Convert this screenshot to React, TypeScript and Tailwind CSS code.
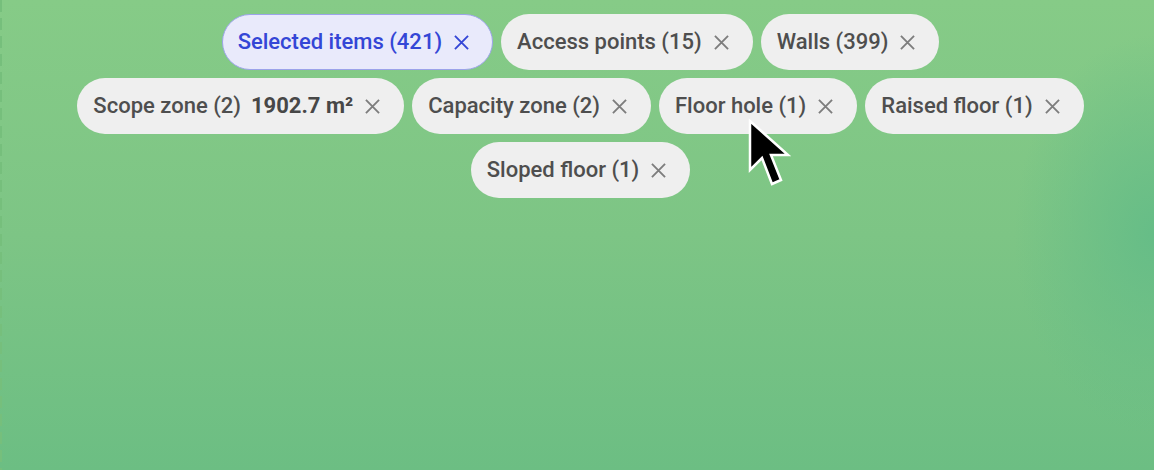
import React from "react";

type Chip = { label: string; extra?: string; selected?: boolean };

const chips: Chip[] = [
  { label: "Selected items (421)", selected: true },
  { label: "Access points (15)" },
  { label: "Walls (399)" },
  { label: "Scope zone (2)", extra: "1902.7 m²" },
  { label: "Capacity zone (2)" },
  { label: "Floor hole (1)" },
  { label: "Raised floor (1)" },
  { label: "Sloped floor (1)" },
];

function CloseIcon({ className }: { className?: string }) {
  return (
    <svg viewBox="0 0 16 16" className={className} fill="none">
      <path d="M1 1 L15 15 M15 1 L1 15" stroke="currentColor" strokeWidth="2" strokeLinecap="butt" />
    </svg>
  );
}

function ChipView({ chip }: { chip: Chip }) {
  const base =
    "flex h-[56px] items-center rounded-full text-[22px] font-medium leading-none";
  return (
    <div
      className={
        chip.selected
          ? base + " border border-[#9ca3ea] bg-[#e9eafb] text-[#3446d6] pl-[15px] pr-[23px]"
          : base + " bg-[#efefef] text-[#4e4e4e] pl-4 pr-[24px]"
      }
    >
      <span>{chip.label}</span>
      {chip.extra && <span className="ml-[10px] font-bold text-[#474747]">{chip.extra}</span>}
      <CloseIcon
        className={
          chip.selected
            ? "ml-[12px] h-[15px] w-[15px] text-[#3446d6]"
            : "ml-[12px] h-[15px] w-[15px] text-[#7d7d7d]"
        }
      />
    </div>
  );
}

export default function App() {
  return (
    <div
      className="relative h-[470px] w-[1154px] overflow-hidden bg-[linear-gradient(180deg,#86cb87_0%,#7dc585_50%,#6cbe83_100%)]"
      style={{ fontFamily: "Roboto, 'Noto Sans', sans-serif" }}
    >
      <div className="pointer-events-none absolute inset-0 bg-[radial-gradient(ellipse_140px_200px_at_1154px_235px,#66bd87_0%,rgba(102,189,135,0.6)_40%,rgba(102,189,135,0)_100%)]" />
      <div className="absolute left-0 top-0 h-full w-[2px] bg-[repeating-linear-gradient(180deg,#76bf7c_0px,#76bf7c_12px,transparent_12px,transparent_18px)]" />
      <div className="relative pl-[7px] pt-[14px]">
        <div className="mx-auto flex max-w-[1024px] flex-wrap justify-center gap-2">
          {chips.map((c) => (
            <ChipView key={c.label} chip={c} />
          ))}
        </div>
      </div>
      <svg
        className="absolute left-[747px] top-[118px]"
        width="46"
        height="72"
        viewBox="0 0 46 72"
      >
        <path
          d="M3 3 L3 52 L15 40 L25 66 L34 62 L24 37 L41 37 Z"
          fill="#000"
          stroke="#fff"
          strokeWidth="2.5"
          strokeLinejoin="miter"
        />
      </svg>
    </div>
  );
}
